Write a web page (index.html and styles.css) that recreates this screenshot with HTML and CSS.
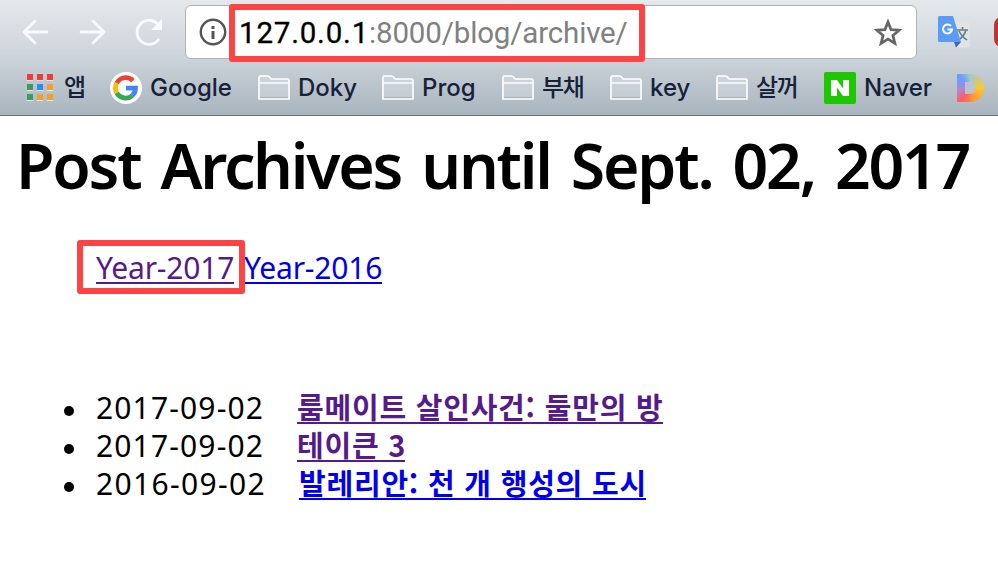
FILE: index.html
```html
<!DOCTYPE html>
<html lang="ko">
<head>
<meta charset="utf-8">
<title>Post Archives</title>
<link rel="stylesheet" href="styles.css">
</head>
<body>
<svg width="0" height="0" class="defs">
  <symbol id="folder" viewBox="0 0 32 26">
    <path d="M1 24V2.500Q1 1 2.500 1H9.500Q11 1 12 2.500L13 4H29.500Q31 4 31 5.500V24Z" fill="#fff" fill-opacity=".22" stroke="#fff" stroke-width="1.600"/>
    <path d="M1 8H31" stroke="#fff" stroke-width="1.400"/>
    <path d="M2 22.500H30" stroke="#a6adb5" stroke-width="1"/>
  </symbol>
</svg>
<header class="chrome">
  <div class="toolbar">
    <svg class="nav" width="160" height="32" viewBox="0 0 160 32" fill="none" stroke="#f8fafc" stroke-width="2.800" stroke-linecap="round" stroke-linejoin="round">
      <path d="M13 5L2 16L13 27M2 16H25M71 5L82 16L71 27M59 16H82"/>
      <path d="M137 23A12 12 0 1 1 134 6.500L137 9" stroke-linecap="butt"/>
      <path d="M140 3V14H129Z" fill="#f8fafc" stroke="none"/>
    </svg>
    <div class="address">
      <svg class="info" width="28" height="28" viewBox="0 0 28 28"><circle cx="14" cy="14" r="12.200" fill="none" stroke="#555" stroke-width="2.400"/><path d="M12.500 8h3v3h-3zM12.500 13h3v8h-3z" fill="#555"/></svg>
      <div class="url"><span class="host">127.0.0.1</span><span class="path">:8000/blog/archive/</span></div>
      <svg class="star" width="30" height="29" viewBox="0 0 30 29"><path d="M15 4L18 11.600L26.200 12.200L19.900 17.400L21.900 25.300L15 21L8.100 25.300L10.100 17.400L3.800 12.200L12 11.600Z" fill="none" stroke="#666" stroke-width="2.700"/></svg>
    </div>
    <svg class="translate" width="32" height="32" viewBox="0 0 32 32">
      <path d="M12 6H30Q32 6 32 8V30Q32 31.500 30 31.500H20Z" fill="#e2e3e5"/>
      <path d="M19 14H30M24.500 11V14M28 14Q26 21 20 24M21 15Q24 21 29 24" fill="none" stroke="#607f88" stroke-width="1.600"/>
      <path d="M16 26H23L18 31.500Z" fill="#4464c4"/>
      <path d="M1.500 0H15L23 26H1.500Q0 26 0 24.500V1.500Q0 0 1.500 0Z" fill="#5b9bf3"/>
      <path d="M13 10A4.500 4.500 0 1 0 14 13.500H9.500" fill="none" stroke="#fff" stroke-width="2"/>
    </svg>
    <div class="extension"></div>
  </div>
  <nav class="bookmarks">
    <div class="mark apps">
      <svg width="26" height="27" viewBox="0 0 26 27"><path d="M0 6h6v1H0zM10 6h6v1h-6zM20 6h6v1h-6zM0 16h6v1H0zM10 16h6v1h-6zM20 16h6v1h-6zM0 26h6v1H0zM10 26h6v1h-6zM20 26h6v1h-6z" fill="#e4eaee"/><path d="M0 0h6v6H0zM10 0h6v6h-6zM20 0h6v6h-6z" fill="#f23b38"/><path d="M0 10h6v6H0zM0 20h6v6H0z" fill="#3c9b5b"/><path d="M10 10h6v6h-6z" fill="#278cf3"/><path d="M20 10h6v6h-6zM10 20h6v6h-6zM20 20h6v6h-6z" fill="#f0a128"/></svg><span class="ko">앱</span></div>
    <div class="mark google">
      <svg width="32" height="32" viewBox="0 0 32 32"><circle cx="16" cy="16" r="16" fill="#fff"/><g fill="none" stroke-width="4.800"><path d="M6.700 11.200A10.200 10.200 0 0 1 23 8.600" stroke="#ea4335"/><path d="M6.700 20.800A10.200 10.200 0 0 1 6.700 11.200" stroke="#fbbc05"/><path d="M22.500 23.500A10.200 10.200 0 0 1 6.700 20.800" stroke="#34a853"/><path d="M16 16.200H25.500A10 10 0 0 1 22.300 23.600" stroke="#4285f4"/></g></svg><span>Google</span></div>
    <div class="mark"><svg width="32" height="26"><use href="#folder"/></svg><span>Doky</span></div>
    <div class="mark"><svg width="32" height="26"><use href="#folder"/></svg><span>Prog</span></div>
    <div class="mark"><svg width="32" height="26"><use href="#folder"/></svg><span class="ko">부채</span></div>
    <div class="mark"><svg width="32" height="26"><use href="#folder"/></svg><span>key</span></div>
    <div class="mark"><svg width="32" height="26"><use href="#folder"/></svg><span class="ko">살꺼</span></div>
    <div class="mark"><svg width="32" height="32" viewBox="0 0 32 32"><rect width="32" height="32" rx="2" fill="#1ec800"/><path d="M7 8H13L19 16.500V8H25V24H19L13 15.500V24H7Z" fill="#fff"/></svg><span>Naver</span></div>
    <div class="mark daum"><div class="ring"></div><i class="edge"></i></div>
  </nav>
</header>
<main>
  <h1>Post Archives until Sept. 02, 2017</h1>
  <div class="years"><span class="marked"><a class="visited" href="#">Year-2017</a></span><a href="#">Year-2016</a></div>
  <ul class="posts">
    <li><span class="date">2017-09-02</span><a class="visited t1" href="#">룸메이트 살인사건: 둘만의 방</a></li>
    <li><span class="date">2017-09-02</span><a class="visited t2" href="#">테이큰 3</a></li>
    <li><span class="date d3">2016-09-02</span><a class="t3" href="#">발레리안: 천 개 행성의 도시</a></li>
  </ul>
</main>
</body>
</html>
```
FILE: styles.css
```css
* { box-sizing: border-box; }
body { margin: 0; width: 998px; height: 588px; overflow: hidden; background: #fff; color: #000; font-family: "Noto Sans", "Noto Sans CJK KR", sans-serif; }
svg { display: block; flex: none; }
.defs { position: absolute; }
.chrome { height: 116px; overflow: hidden; background: linear-gradient(#e5e9ec, #ccd3da 50%, #a9b5be); border-bottom: 1px solid #66717c; }
.toolbar { display: flex; height: 64px; align-items: flex-start; }
.nav { margin: 16px 4px 0 22px; width: 160px; }
.address { display: flex; margin: 5px 21px 0 -1px; width: 732px; height: 54px; flex: none; background: #fff; border: 1px solid #b0b3b6; border-radius: 6px; align-items: center; padding-left: 12px; }
.info { margin-left: 1px; }
.url { position: relative; display: flex; align-items: center; width: 416px; height: 58px; margin: 2px 0 0 2px; padding-left: 4px; border: 6px solid #ff4242; border-radius: 3px; flex: none; font: 29.500px/40px Roboto, sans-serif; white-space: nowrap; }
.host { width: 130px; letter-spacing: .8px; -webkit-text-stroke: .3px #000; }
.path { color: #808080; letter-spacing: -.15px; }
.star { margin-left: 228px; }
.translate { margin-top: 16px; }
.extension { margin: 17px 0 0 24px; width: 30px; height: 30px; border-radius: 8px; background: #bd3531; flex: none; }
.bookmarks { display: grid; grid-template-columns: 84px 148px 124px 120px 108px 106px 108px 133px 60px; padding-left: 26px; height: 47px; align-items: center; color: #17213a; font: 500 24px/32px Inter, "Noto Sans CJK KR", sans-serif; }
.mark { display: flex; align-items: center; gap: 8px; white-space: nowrap; height: 32px; }
.mark .ko { font-family: "Noto Sans CJK KR", sans-serif; font-size: 24px; letter-spacing: -1.3px; margin-top: -4px; }
.apps { gap: 11px; padding-left: 1px; }
.ring { width: 27px; height: 28px; padding: 8px; border-radius: 0 14px 14px 0; background: conic-gradient(#a5c9c8, #ffc928 25%, #ff9a35 45%, #ff5b62 60%, #b886ce 72%, #6c9cff 88%, #a5c9c8); }
.ring::after { content: ""; display: block; width: 11px; height: 12px; border-radius: 0 6px 6px 0; background: #bbc4cc; }
.edge { width: 2px; height: 17px; margin-left: 5px; background: #c9c6a0; }
h1 { margin: 7px 0 0 16px; height: 84px; font: 600 62.500px/84px "Noto Sans", sans-serif; letter-spacing: -2.2px; word-spacing: 6px; white-space: nowrap; }
a { color: #00e; text-decoration: none; border-bottom: 2px solid currentColor; }
.visited { color: #551a8b; }
.years { display: flex; margin: 33px 0 0 77px; height: 54px; font-size: 30px; letter-spacing: -.2px; white-space: nowrap; }
.years a { display: block; height: 29px; line-height: 25px; margin-top: 9px; width: 138px; }
.marked { width: 168px; height: 54px; border: 6px solid #ff4242; border-radius: 3px; padding-left: 13px; flex: none; position: relative; }
.years > a { margin: 15px 0 0 -1px; }
.posts { list-style: none; margin: 95px 0 0; padding: 0 0 0 64px; font-size: 30px; }
.posts li { display: flex; height: 38px; align-items: flex-start; white-space: nowrap; }
.posts li::before { content: ""; width: 10px; height: 10px; border-radius: 50%; background: #000; margin: 17px 22px 0 0; flex: none; }
.date { width: 201px; line-height: 38px; flex: none; letter-spacing: 1.15px; }
.d3 { width: 203px; letter-spacing: 1.35px; }
.posts a { height: 35px; line-height: 34px; font-family: "Noto Sans CJK KR", sans-serif; font-weight: 700; font-size: 29px; letter-spacing: .78px; }
.posts .t1 { width: 366px; }
.posts .t2 { width: 108px; }
.posts .t3 { width: 347px; }
```
